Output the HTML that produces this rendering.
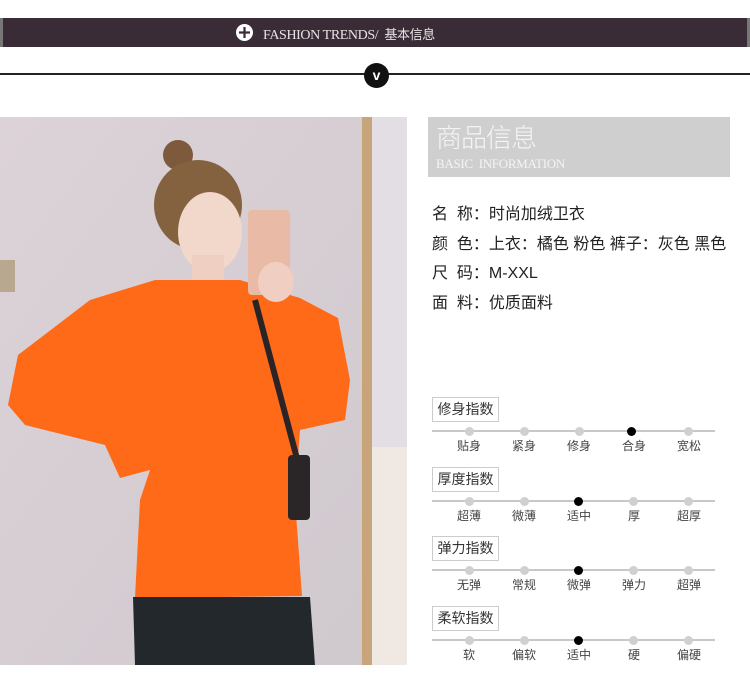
<!DOCTYPE html>
<html><head><meta charset="utf-8"><style>
*{margin:0;padding:0;box-sizing:border-box}
body{width:750px;height:694px;background:#fff;position:relative;overflow:hidden;font-family:"Liberation Sans","Noto Sans CJK SC",sans-serif}
.bar{position:absolute;left:0;top:18px;width:750px;height:29px;background:#3a2c36;border-left:3px solid #777;border-right:3px solid #777}
.bar .t{position:absolute;left:260px;top:6px;color:#e8e2e6;font-family:"Liberation Serif","Noto Serif CJK SC",serif;font-size:14px;letter-spacing:-0.4px}
.bar .c{position:absolute;left:233px;top:6px;width:17px;height:17px;border-radius:50%;background:#fff}
.hl{position:absolute;left:0;top:73px;width:750px;height:2px;background:#222}
.vc{position:absolute;left:364px;top:63px;width:25px;height:25px;border-radius:50%;background:#111;color:#fff;font-size:14px;font-weight:bold;text-align:center;line-height:24px}
.gbox{position:absolute;left:428px;top:117px;width:302px;height:60px;background:#cfcfcf}
.gbox .a{position:absolute;left:8px;top:6px;color:#f4f4f4;font-size:26px;font-weight:300;letter-spacing:-1px;line-height:30px}
.gbox .b{position:absolute;left:8px;top:39px;color:#f4f4f4;font-size:13px;font-family:"Liberation Serif",serif;letter-spacing:-0.3px}
.ln{position:absolute;left:432px;font-size:16px;color:#222;white-space:nowrap}
.box{position:absolute;left:432px;width:67px;height:25px;border:1px solid #ccc;font-size:14px;color:#333;text-align:center;line-height:23px}
.sl{position:absolute;left:432px;width:283px;height:2px;background:#c8c8c8}
.dot{position:absolute;width:9px;height:9px;border-radius:50%;background:#d0d0d0}
.dot.on{background:#000}
.lb{position:absolute;font-size:12px;color:#444;width:40px;text-align:center}
</style></head><body>
<div class="bar"><div class="c"><svg width="17" height="17"><path d="M8.5 3v11M3 8.5h11" stroke="#3a2c36" stroke-width="2.2"/></svg></div><div class="t">FASHION TRENDS/ &nbsp;<span style="font-family:'Noto Sans CJK SC',sans-serif;font-size:13px">基本信息</span></div></div>
<div class="hl"></div>
<div class="vc">v</div>
<svg style="position:absolute;left:0;top:117px" width="407" height="548" viewBox="0 117 407 548">
<defs><linearGradient id="w" x1="0" x2="1" y1="0" y2="1"><stop offset="0" stop-color="#dcd3d8"/><stop offset="1" stop-color="#cfc8cd"/></linearGradient></defs>
<rect x="0" y="117" width="407" height="548" fill="url(#w)"/>
<rect x="372" y="117" width="35" height="548" fill="#e2dee4"/>
<rect x="372" y="447" width="35" height="218" fill="#efe8e3"/>
<rect x="362" y="117" width="10" height="548" fill="#c7a47a"/>
<rect x="0" y="260" width="15" height="32" fill="#b8a890"/>
<circle cx="178" cy="155" r="15" fill="#7d5a3c"/>
<ellipse cx="198" cy="205" rx="44" ry="45" fill="#85623f"/>
<ellipse cx="210" cy="232" rx="32" ry="40" fill="#f2d7cb"/>
<rect x="192" y="255" width="32" height="28" fill="#efcfc2"/>
<polygon fill="#ff6a18" points="155,280 240,280 300,298 338,318 350,380 345,420 300,430 295,500 302,596 135,598 140,500 150,470 120,478 105,445 25,425 8,405 18,355 90,300"/>
<rect x="248" y="210" width="42" height="85" rx="4" fill="#e9bba6"/>
<ellipse cx="276" cy="282" rx="18" ry="20" fill="#f0cfc2"/>
<path d="M255 300 L300 470" stroke="#2a2426" stroke-width="6"/>
<rect x="288" y="455" width="22" height="65" rx="4" fill="#2a2628"/>
<polygon fill="#23282c" points="133,597 310,597 315,665 135,665"/>
</svg>
<div class="gbox"><div class="a">商品信息</div><div class="b">BASIC &nbsp;INFORMATION</div></div>
<div class="ln" style="top:200px">名&nbsp; 称：时尚加绒卫衣</div>
<div class="ln" style="top:230px">颜&nbsp; 色：上衣：橘色 粉色 裤子：灰色 黑色</div>
<div class="ln" style="top:259px">尺&nbsp; 码：M-XXL</div>
<div class="ln" style="top:289px">面&nbsp; 料：优质面料</div>

<div class="box" style="top:397px">修身指数</div>
<div class="sl" style="top:430px"></div>
<div class="dot" style="left:465px;top:427px"></div><div class="dot" style="left:520px;top:427px"></div><div class="dot" style="left:575px;top:427px"></div><div class="dot on" style="left:627px;top:427px"></div><div class="dot" style="left:684px;top:427px"></div>
<div class="lb" style="left:449px;top:437px">贴身</div><div class="lb" style="left:504px;top:437px">紧身</div><div class="lb" style="left:559px;top:437px">修身</div><div class="lb" style="left:614px;top:437px">合身</div><div class="lb" style="left:669px;top:437px">宽松</div>

<div class="box" style="top:467px">厚度指数</div>
<div class="sl" style="top:500px"></div>
<div class="dot" style="left:465px;top:497px"></div><div class="dot" style="left:520px;top:497px"></div><div class="dot on" style="left:574px;top:497px"></div><div class="dot" style="left:629px;top:497px"></div><div class="dot" style="left:684px;top:497px"></div>
<div class="lb" style="left:449px;top:507px">超薄</div><div class="lb" style="left:504px;top:507px">微薄</div><div class="lb" style="left:559px;top:507px">适中</div><div class="lb" style="left:614px;top:507px">厚</div><div class="lb" style="left:669px;top:507px">超厚</div>

<div class="box" style="top:536px">弹力指数</div>
<div class="sl" style="top:569px"></div>
<div class="dot" style="left:465px;top:566px"></div><div class="dot" style="left:520px;top:566px"></div><div class="dot on" style="left:574px;top:566px"></div><div class="dot" style="left:629px;top:566px"></div><div class="dot" style="left:684px;top:566px"></div>
<div class="lb" style="left:449px;top:576px">无弹</div><div class="lb" style="left:504px;top:576px">常规</div><div class="lb" style="left:559px;top:576px">微弹</div><div class="lb" style="left:614px;top:576px">弹力</div><div class="lb" style="left:669px;top:576px">超弹</div>

<div class="box" style="top:606px">柔软指数</div>
<div class="sl" style="top:639px"></div>
<div class="dot" style="left:465px;top:636px"></div><div class="dot" style="left:520px;top:636px"></div><div class="dot on" style="left:574px;top:636px"></div><div class="dot" style="left:629px;top:636px"></div><div class="dot" style="left:684px;top:636px"></div>
<div class="lb" style="left:449px;top:646px">软</div><div class="lb" style="left:504px;top:646px">偏软</div><div class="lb" style="left:559px;top:646px">适中</div><div class="lb" style="left:614px;top:646px">硬</div><div class="lb" style="left:669px;top:646px">偏硬</div>
</body></html>
